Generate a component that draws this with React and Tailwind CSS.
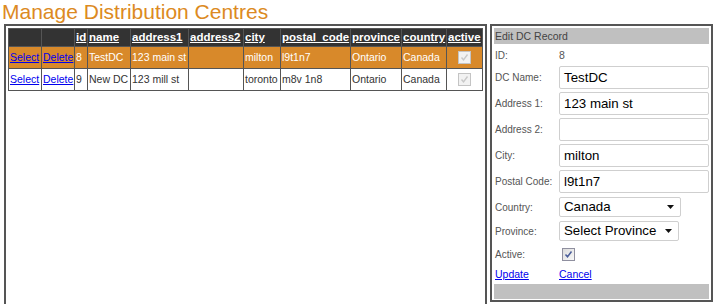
import React from "react";

const F = { fontFamily: '"Liberation Sans", Arial, sans-serif' };

const cols = [33, 33, 13, 43, 58, 55, 37, 70, 51, 45, 36];
const heads = ["", "", "id", "name", "address1", "address2", "city", "postal_code", "province", "country", "active"];

const rows = [
  { id: "8", name: "TestDC", a1: "123 main st", a2: "", city: "milton", pc: "l9t1n7", prov: "Ontario", country: "Canada", sel: true },
  { id: "9", name: "New DC", a1: "123 mill st", a2: "", city: "toronto", pc: "m8v 1n8", prov: "Ontario", country: "Canada", sel: false },
];

function GrayCheck() {
  return (
    <div className="w-[13px] h-[13px] border border-[#c4c4c4] bg-[#f2f2f2] flex items-center justify-center">
      <svg width="9" height="9" viewBox="0 0 9 9">
        <path d="M1.5 4.5 L3.5 6.8 L7.5 1.5" fill="none" stroke="#c8c8c8" strokeWidth="1.4" />
      </svg>
    </div>
  );
}

function BlueCheck() {
  return (
    <div className="w-[13px] h-[13px] border border-[#8f8f9f] bg-gradient-to-br from-[#dcdcdc] to-[#f8f8f8] flex items-center justify-center">
      <svg width="9" height="9" viewBox="0 0 9 9">
        <path d="M1.5 4.5 L3.5 6.8 L7.5 1.5" fill="none" stroke="#4a5d9a" strokeWidth="1.5" />
      </svg>
    </div>
  );
}

function Input({ value }) {
  return (
    <div className="w-[150px] h-[23px] border border-[#cfcfcf] rounded-[2px] bg-white flex items-center pl-[4px] text-[13.3px] text-black">
      {value}
    </div>
  );
}

function Select({ value, w }) {
  return (
    <div
      className="h-[20px] border border-[#cfcfcf] rounded-[2px] bg-white flex items-center justify-between pl-[4px] pr-[6px] text-[13.3px] text-black"
      style={{ width: w }}
    >
      <span>{value}</span>
      <svg width="7" height="4" viewBox="0 0 7 4">
        <path d="M0 0 H7 L3.5 4 Z" fill="#111" />
      </svg>
    </div>
  );
}

function Label({ children }) {
  return <div className="w-[65px] pl-[1px] text-[10px] text-[#555] shrink-0">{children}</div>;
}

export default function App() {
  return (
    <div className="w-[716px] h-[304px] bg-white overflow-hidden" style={F}>
      <div className="h-[24px] pl-[2px] text-[21px] leading-[24px] text-[#dc8a22]">Manage Distribution Centres</div>
      <div className="flex">
        <div className="ml-[4px] w-[483px] h-[320px] border-2 border-[#555] p-[2px] shrink-0">
          <table className="border-collapse table-fixed text-[10.5px]" style={{ width: 475 }}>
            <colgroup>
              {cols.map((w, i) => (
                <col key={i} style={{ width: w }} />
              ))}
            </colgroup>
            <thead>
              <tr className="bg-[#333] h-[18px]">
                {heads.map((h, i) => (
                  <th key={i} className="border border-[#555] px-[1px] text-left text-[11.5px] font-bold text-white underline whitespace-nowrap overflow-hidden leading-[15px]">
                    {h}
                  </th>
                ))}
              </tr>
            </thead>
            <tbody>
              {rows.map((r) => {
                const tc = r.sel ? "text-white" : "text-[#333]";
                const cell = `border border-[#555] px-[1px] whitespace-nowrap overflow-hidden ${tc}`;
                return (
                  <tr key={r.id} className={`${r.sel ? "bg-[#d8892a]" : "bg-white"} h-[22px]`}>
                    <td className="border border-[#555] px-[1px] whitespace-nowrap overflow-hidden">
                      <a className="text-[#0000ee] underline">Select</a>
                    </td>
                    <td className="border border-[#555] px-[1px] whitespace-nowrap overflow-hidden">
                      <a className="text-[#0000ee] underline">Delete</a>
                    </td>
                    <td className={cell}>{r.id}</td>
                    <td className={cell}>{r.name}</td>
                    <td className={cell}>{r.a1}</td>
                    <td className={cell}>{r.a2}</td>
                    <td className={cell}>{r.city}</td>
                    <td className={cell}>{r.pc}</td>
                    <td className={cell}>{r.prov}</td>
                    <td className={cell}>{r.country}</td>
                    <td className="border border-[#555] px-[1px]">
                      <div className="flex justify-center">
                        <GrayCheck />
                      </div>
                    </td>
                  </tr>
                );
              })}
            </tbody>
          </table>
        </div>
        <div className="ml-[3px] w-[223px] border-2 border-[#555] p-[2px] shrink-0 h-[278px]">
          <div className="h-[16px] bg-[#c0c0c0] text-[10.5px] leading-[16px] pl-[1px] text-[#444]">Edit DC Record</div>
          <div className="h-[21px] flex items-center pt-[2px]">
            <Label>ID:</Label>
            <div className="text-[10.5px] text-[#555]">8</div>
          </div>
          <div className="mt-[1px] flex flex-col gap-[3px]">
            <div className="flex items-center">
              <Label>DC Name:</Label>
              <Input value="TestDC" />
            </div>
            <div className="flex items-center">
              <Label>Address 1:</Label>
              <Input value="123 main st" />
            </div>
            <div className="flex items-center">
              <Label>Address 2:</Label>
              <Input value="" />
            </div>
            <div className="flex items-center">
              <Label>City:</Label>
              <Input value="milton" />
            </div>
            <div className="flex items-center">
              <Label>Postal Code:</Label>
              <Input value="l9t1n7" />
            </div>
          </div>
          <div className="mt-[4px] flex flex-col gap-[4px]">
            <div className="flex items-center">
              <Label>Country:</Label>
              <Select value="Canada" w={122} />
            </div>
            <div className="flex items-center">
              <Label>Province:</Label>
              <Select value="Select Province" w={120} />
            </div>
          </div>
          <div className="h-[22px] flex items-center mt-[2px]">
            <Label>Active:</Label>
            <div className="ml-[3px]">
              <BlueCheck />
            </div>
          </div>
          <div className="h-[18px] flex items-center text-[10.5px] mt-[1px]">
            <div className="w-[65px] pl-[1px]">
              <a className="text-[#0000ee] underline">Update</a>
            </div>
            <a className="text-[#0000ee] underline">Cancel</a>
          </div>
          <div className="h-[15px] bg-[#c0c0c0]" />
        </div>
      </div>
    </div>
  );
}
